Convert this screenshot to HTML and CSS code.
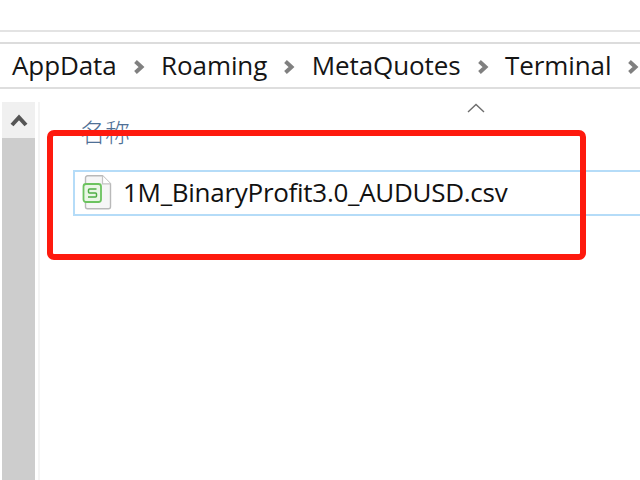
FILE: index.html
```html
<!DOCTYPE html>
<html lang="zh">
<head>
<meta charset="utf-8">
<title>AppData</title>
<link rel="stylesheet" href="styles.css">
</head>
<body>
<div class="top-gap"></div>
<div class="toolbar-gap"></div>
<nav class="crumbs">
  <span class="crumb">AppData</span>
  <svg class="sep" viewBox="0 0 12 14"><path d="M2.500 1.500 8.500 7l-6 5.500" /></svg>
  <span class="crumb">Roaming</span>
  <svg class="sep" viewBox="0 0 12 14"><path d="M2.500 1.500 8.500 7l-6 5.500" /></svg>
  <span class="crumb">MetaQuotes</span>
  <svg class="sep" viewBox="0 0 12 14"><path d="M2.500 1.500 8.500 7l-6 5.500" /></svg>
  <span class="crumb">Terminal</span>
  <svg class="sep" viewBox="0 0 12 14"><path d="M2.500 1.500 8.500 7l-6 5.500" /></svg>
</nav>
<main class="body">
  <aside class="scrollbar">
    <div class="scroll-btn">
      <svg class="scroll-arrow" viewBox="0 0 18 13"><path d="M2 11 9 3.500l7 7.500" /></svg>
    </div>
    <div class="scroll-thumb"></div>
  </aside>
  <section class="list">
    <div class="sort-row">
      <svg class="sort-arrow" viewBox="0 0 18 10"><path d="M1 9 9 1.500 17 9" /></svg>
    </div>
    <div class="header">名称</div>
    <div class="row">
      <svg class="file-icon" viewBox="0 0 30 36">
        <path class="sheet" d="M5.500 0.800h15l8 8v23a2 2 0 0 1-2 2h-21a2 2 0 0 1-2-2v-29a2 2 0 0 1 2-2z" />
        <path class="fold" d="M20.500 0.800v8h8" />
        <rect class="badge" x="1.500" y="9" width="17.500" height="18" rx="2.500" />
        <path class="letter" d="M14.500 14H7.500a1 1 0 0 0-1 1v2a1 1 0 0 0 1 1h6a1 1 0 0 1 1 1v2a1 1 0 0 1-1 1H6" />
      </svg>
      <span class="name">1M_BinaryProfit3.0_AUDUSD.csv</span>
    </div>
  </section>
</main>
<div class="highlight"></div>
</body>
</html>
```
FILE: styles.css
```css
* { box-sizing: border-box; }
html, body { margin: 0; padding: 0; }
body {
  width: 640px;
  height: 480px;
  overflow: hidden;
  position: relative;
  background: #fff;
  font-family: "Open Sans", "Noto Sans", "Noto Sans CJK SC", sans-serif;
}
.top-gap { height: 32px; border-bottom: 2px solid #e3e3e3; }
.toolbar-gap { height: 12px; border-bottom: 2px solid #dcdcdc; }
.crumbs {
  height: 45px;
  display: flex;
  align-items: center;
  padding-left: 12px;
  border-bottom: 2px solid #dedede;
  white-space: nowrap;
  color: #151515;
  font-size: 26px;
  font-family: "Open Sans", sans-serif;
  letter-spacing: -0.1px;
}
.crumb { line-height: 45px; }
.sep {
  width: 12px;
  height: 14px;
  margin: 2px 16.500px 0 16px;
  flex: none;
}
.sep path { fill: none; stroke: #808080; stroke-width: 4; }
.body { display: flex; height: 391px; }
.scrollbar {
  width: 38px;
  margin-left: 2px;
  margin-top: 13px;
  display: flex;
  flex-direction: column;
  border-right: 2px solid #f4f4f4;
  background: #fff;
}
.scroll-btn {
  height: 36px;
  width: 33px;
  background: #f0f0f0;
  display: flex;
  align-items: center;
  justify-content: center;
}
.scroll-arrow { width: 18px; height: 13px; }
.scroll-arrow path { fill: none; stroke: #555; stroke-width: 4; }
.scroll-thumb { flex: 1; width: 33px; background: #cdcdcd; }
.list { flex: 1; min-width: 0; padding-left: 33px; }
.sort-row { height: 12px; position: relative; }
.sort-arrow {
  position: absolute;
  left: 394px;
  top: 14px;
  width: 18px;
  height: 10px;
}
.sort-arrow path { fill: none; stroke: #6d6d6d; stroke-width: 1.400; }
.header {
  margin-left: 7px;
  margin-top: 15px;
  height: 54px;
  font-size: 25px;
  line-height: 30px;
  color: #4f7096;
  font-family: "Noto Sans CJK SC", sans-serif;
  font-weight: 300;
}
.row {
  height: 46px;
  border: 2px solid #b5dcf8;
  border-right: 0;
  display: flex;
  align-items: center;
  padding-left: 7px;
}
.file-icon { width: 30px; height: 36px; flex: none; }
.sheet { fill: #f6f6f6; stroke: #b9b9b9; stroke-width: 1.400; }
.fold { fill: #fff; stroke: #c4c4c4; stroke-width: 1.200; }
.badge { fill: #eaf6e6; stroke: #6cc35f; stroke-width: 1.800; }
.letter { fill: none; stroke: #4fae45; stroke-width: 1.500; }
.name {
  margin-left: 11px;
  margin-bottom: 3px;
  font-size: 26px;
  letter-spacing: -0.28px;
  color: #111;
  font-family: "Open Sans", sans-serif;
}
.highlight {
  position: absolute;
  left: 47px;
  top: 130px;
  width: 539px;
  height: 130px;
  border: 6px solid #fe1a0e;
  border-radius: 7px;
}
```
